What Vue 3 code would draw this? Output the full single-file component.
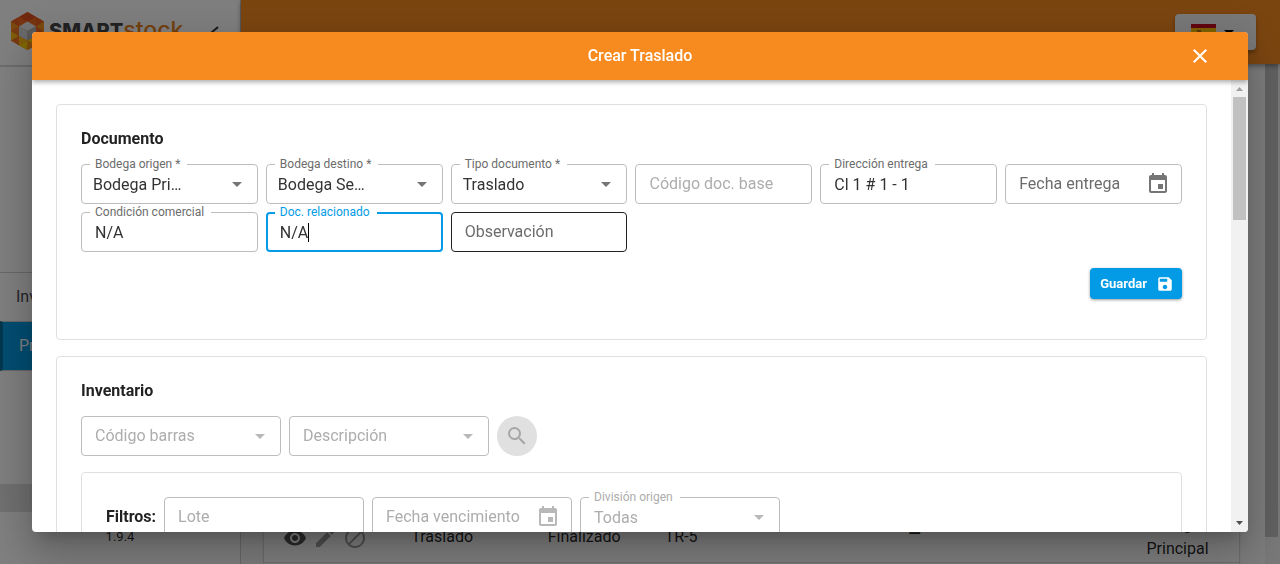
<script setup>
import { ref } from 'vue'

const documentFields = ref([
  { id: 'origen', label: 'Bodega origen *', type: 'select', value: 'Bodega Principal' },
  { id: 'destino', label: 'Bodega destino *', type: 'select', value: 'Bodega Secundaria' },
  { id: 'tipo', label: 'Tipo documento *', type: 'select', value: 'Traslado' },
  { id: 'base', label: 'Código doc. base', type: 'text', value: '', disabled: true },
  { id: 'direccion', label: 'Dirección entrega', type: 'text', value: 'Cl 1 # 1 - 1' },
  { id: 'fecha', label: 'Fecha entrega', type: 'date', value: '' },
  { id: 'condicion', label: 'Condición comercial', type: 'text', value: 'N/A' },
  { id: 'relacionado', label: 'Doc. relacionado', type: 'text', value: 'N/A', active: true },
  { id: 'observacion', label: 'Observación', type: 'text', value: '', hovered: true }
])

const searchFields = ref([
  { id: 'barras', label: 'Código barras', type: 'select', value: '', disabled: true },
  { id: 'descripcion', label: 'Descripción', type: 'select', value: '', disabled: true }
])

const filterFields = ref([
  { id: 'lote', label: 'Lote', type: 'text', value: '', disabled: true },
  { id: 'vencimiento', label: 'Fecha vencimiento', type: 'date', value: '', disabled: true },
  { id: 'division', label: 'División origen', type: 'select', value: 'Todas', disabled: true }
])

const fieldClass = (f) => ({
  disabled: f.disabled,
  active: f.active,
  hovered: f.hovered,
  floating: f.value !== ''
})
</script>

<template>
  <div class="page">
    <aside class="sidebar">
      <div class="brand">
        <svg class="brand-mark" viewBox="0 0 34 38" aria-hidden="true">
          <path fill="#f26a21" d="M17 0 33.500 9.500v19L17 38 .5 28.500v-19z" />
          <path fill="#e2531f" d="M17 0 8.500 5l8.500 4.500zM17 0l8.500 5L17 9.500z" />
          <path fill="#ea5f20" d="M.5 9.500 8.500 5v9.500zM33.500 9.500 25.500 5v9.500z" />
          <path fill="#f7941d" d="M.5 9.500l8 5-8 4.500zM33.500 9.500V19l-8-4.500z" />
          <path fill="#fdb913" d="M.5 19v9.500l8-4.500zM33.500 19v9.500l-8-4.500zM8.500 24v9.500L17 28.500z" />
          <path fill="#ee7623" d="M.5 28.500l8-4.500v9.500zM8.500 14.500V24l-8-5z" />
          <path fill="#fdd000" d="M8.500 33.500 17 38v-9.500zM25.500 24v9.500L17 28.500z" />
          <path fill="#f7941d" d="M17 38l8.500-4.500-8.500-5zM33.500 28.500l-8-4.500v9.500z" />
          <path fill="#e4e6e8" d="M17 9.500l8.500 5L17 19l-8.500-4.500z" />
          <path fill="#cfd2d5" d="M8.500 14.500 17 19v9.500L8.500 24z" />
          <path fill="#aeb2b6" d="M25.500 14.500 17 19v9.500l8.500-4.500z" />
        </svg>
        <span class="brand-name">SMART<b>stock</b></span>
        <svg class="brand-toggle" viewBox="0 0 12 16" aria-hidden="true">
          <path d="M10 2 3 8l7 6" fill="none" stroke="#333" stroke-width="2" />
        </svg>
      </div>
      <div class="profile"></div>
      <nav>
        <a class="nav-item" href="#">Inventario</a>
        <a class="nav-item current" href="#">Procesos</a>
        <div class="subnav"></div>
        <div class="subnav-current"></div>
      </nav>
      <p class="version">1.9.4</p>
    </aside>

    <div class="workspace">
      <header class="topbar">
        <button class="language" type="button" aria-label="Idioma">
          <svg width="25" height="17" viewBox="0 0 25 17" aria-hidden="true">
            <path fill="#c60b1e" d="M0 0h25v17H0z" />
            <path fill="#ffc400" d="M0 4h25v9H0z" />
            <path fill="#ad6b19" d="M6 6h4v5H6z" />
          </svg>
          <svg width="10" height="5" viewBox="0 0 10 5" aria-hidden="true"><path d="M0 0h10L5 5z" /></svg>
        </button>
      </header>
      <div class="content">
        <div class="list-card">
          <table>
            <tbody>
              <tr>
                <td class="col-actions">
                  <div class="actions">
                    <svg width="24" height="24" viewBox="0 0 24 24" fill="#555" aria-hidden="true"><path d="M12 4.500C7 4.500 2.730 7.610 1 12c1.730 4.390 6 7.500 11 7.500s9.270-3.110 11-7.500c-1.730-4.390-6-7.500-11-7.500zM12 17c-2.760 0-5-2.240-5-5s2.240-5 5-5 5 2.240 5 5-2.240 5-5 5zm0-8c-1.660 0-3 1.340-3 3s1.340 3 3 3 3-1.340 3-3-1.340-3-3-3z" /></svg>
                    <svg width="24" height="24" viewBox="0 0 24 24" fill="#a0a0a0" aria-hidden="true"><path d="M3 17.250V21h3.750L17.810 9.940l-3.750-3.750L3 17.250zM20.710 7.040a1 1 0 0 0 0-1.410l-2.340-2.340a1 1 0 0 0-1.410 0l-1.830 1.830 3.750 3.750 1.830-1.830z" /></svg>
                    <svg width="24" height="24" viewBox="0 0 24 24" fill="#a0a0a0" aria-hidden="true"><path d="M12 2C6.480 2 2 6.480 2 12s4.480 10 10 10 10-4.480 10-10S17.520 2 12 2zM4 12c0-4.420 3.580-8 8-8 1.850 0 3.550.630 4.900 1.690L5.690 16.900A7.900 7.900 0 0 1 4 12zm8 8a7.900 7.900 0 0 1-4.900-1.690L18.310 7.100A7.900 7.900 0 0 1 20 12c0 4.420-3.580 8-8 8z" /></svg>
                  </div>
                </td>
                <td class="col-type">Traslado</td>
                <td class="col-state">Finalizado</td>
                <td class="col-number">TR-5</td>
                <td class="col-note"><b>—</b></td>
                <td class="col-store">Bodega<br />Principal</td>
              </tr>
            </tbody>
          </table>
        </div>
        <div class="page-scroll"><div class="page-thumb"></div></div>
      </div>
    </div>

    <div class="backdrop">
      <section class="dialog" role="dialog" aria-labelledby="dialog-title">
        <header class="dialog-bar">
          <h1 id="dialog-title">Crear Traslado</h1>
          <button class="close" type="button" aria-label="Cerrar">
            <svg width="24" height="24" viewBox="0 0 24 24" fill="#fff" aria-hidden="true"><path d="M19 6.410 17.590 5 12 10.590 6.410 5 5 6.410 10.590 12 5 17.590 6.410 19 12 13.410 17.590 19 19 17.590 13.410 12z" /></svg>
          </button>
        </header>

        <div class="dialog-body">
          <div class="dialog-content">
            <section class="panel">
              <h2>Documento</h2>
              <form class="document-grid" @submit.prevent>
                <div v-for="f in documentFields" :key="f.id" class="field" :class="fieldClass(f)">
                  <label :for="f.id">{{ f.label }}</label>
                  <select v-if="f.type === 'select'" :id="f.id" v-model="f.value">
                    <option>{{ f.value }}</option>
                  </select>
                  <input v-else :id="f.id" v-model="f.value" type="text" :disabled="f.disabled" />
                  <svg v-if="f.type === 'select'" class="arrow" viewBox="0 0 10 5" aria-hidden="true"><path d="M0 0h10L5 5z" /></svg>
                  <svg v-if="f.type === 'date'" class="calendar" viewBox="0 0 24 24" aria-hidden="true"><path d="M17 12h-5v5h5v-5zM16 1v2H8V1H6v2H5c-1.110 0-1.990.900-1.990 2L3 19c0 1.100.890 2 2 2h14c1.100 0 2-.900 2-2V5c0-1.100-.900-2-2-2h-1V1h-2zm3 18H5V8h14v11z" /></svg>
                  <span v-if="f.active" class="caret"></span>
                </div>
              </form>
              <div class="panel-actions">
                <button class="save" type="button">
                  Guardar
                  <svg width="18" height="18" viewBox="0 0 24 24" fill="#fff" aria-hidden="true"><path d="M17 3H5a2 2 0 0 0-2 2v14a2 2 0 0 0 2 2h14c1.100 0 2-.900 2-2V7l-4-4zm-5 16c-1.660 0-3-1.340-3-3s1.340-3 3-3 3 1.340 3 3-1.340 3-3 3zm3-10H5V5h10v4z" /></svg>
                </button>
              </div>
            </section>

            <section class="panel">
              <h2>Inventario</h2>
              <div class="row">
                <div v-for="f in searchFields" :key="f.id" class="field fixed" :class="fieldClass(f)">
                  <label :for="f.id">{{ f.label }}</label>
                  <select :id="f.id" v-model="f.value" disabled></select>
                  <svg class="arrow" viewBox="0 0 10 5" aria-hidden="true"><path d="M0 0h10L5 5z" /></svg>
                </div>
                <button class="search" type="button" aria-label="Buscar" disabled>
                  <svg width="24" height="24" viewBox="0 0 24 24" aria-hidden="true"><path d="M15.500 14h-.790l-.280-.270A6.470 6.470 0 0 0 16 9.500 6.500 6.500 0 1 0 9.500 16c1.610 0 3.090-.590 4.230-1.570l.270.280v.790l5 4.990L20.490 19l-4.990-5zm-6 0C7.010 14 5 11.990 5 9.500S7.010 5 9.500 5 14 7.010 14 9.500 11.990 14 9.500 14z" /></svg>
                </button>
              </div>
              <div class="panel filters">
                <div class="row">
                  <h3>Filtros:</h3>
                  <div v-for="f in filterFields" :key="f.id" class="field fixed" :class="fieldClass(f)">
                    <label :for="f.id">{{ f.label }}</label>
                    <select v-if="f.type === 'select'" :id="f.id" v-model="f.value" disabled>
                      <option>{{ f.value }}</option>
                    </select>
                    <input v-else :id="f.id" v-model="f.value" type="text" disabled />
                    <svg v-if="f.type === 'select'" class="arrow" viewBox="0 0 10 5" aria-hidden="true"><path d="M0 0h10L5 5z" /></svg>
                    <svg v-if="f.type === 'date'" class="calendar" viewBox="0 0 24 24" aria-hidden="true"><path d="M17 12h-5v5h5v-5zM16 1v2H8V1H6v2H5c-1.110 0-1.990.900-1.990 2L3 19c0 1.100.890 2 2 2h14c1.100 0 2-.900 2-2V5c0-1.100-.900-2-2-2h-1V1h-2zm3 18H5V8h14v11z" /></svg>
                  </div>
                </div>
              </div>
            </section>
          </div>

          <div class="scrollbar" aria-hidden="true">
            <svg class="up" viewBox="0 0 17 17"><path d="M5 11h7L8.500 7z" /></svg>
            <div class="thumb"></div>
            <svg class="down" viewBox="0 0 17 17"><path d="M5 6h7l-3.500 4z" /></svg>
          </div>
        </div>
      </section>
    </div>
  </div>
</template>

<style>
body {
  background: #fff;
}
</style>

<style scoped>
* {
  box-sizing: border-box;
}
h1, h2, h3, p {
  margin: 0;
}
.page {
  display: flex;
  height: 100vh;
  overflow: hidden;
  font-family: Roboto, "Liberation Sans", sans-serif;
  font-size: 16px;
  line-height: 24px;
  color: rgba(0, 0, 0, 0.87);
}
button, input, select {
  font-family: inherit;
}

/* Navigation */
.sidebar {
  display: flex;
  flex-direction: column;
  flex: 0 0 241px;
  border-right: 1px solid #d0d0d0;
  background: #fff;
}
.brand {
  display: flex;
  align-items: center;
  flex: 0 0 67px;
  padding: 0 20px 4px 10px;
  border-bottom: 2px solid #d8d8d8;
}
.brand-mark {
  width: 35px;
  height: 38px;
}
.brand-name {
  margin-left: 4px;
  font-family: Inter, sans-serif;
  font-size: 20px;
  font-weight: 800;
  color: #444;
}
.brand-name b {
  font-size: 23px;
  font-weight: 500;
  color: #e8821e;
}
.brand-toggle {
  width: 12px;
  height: 16px;
  margin: 4px 0 0 auto;
}
.profile {
  flex: 0 0 205px;
}
.nav-item {
  display: block;
  height: 49px;
  padding: 0 16px;
  border-top: 1px solid #d0d0d0;
  line-height: 48px;
  color: #4a4a55;
  text-decoration: none;
}
.nav-item.current {
  height: 50px;
  border-left: 3px solid #006da0;
  border-bottom: 1px solid #d0d0d0;
  background: #039be5;
  color: #fff;
}
.subnav {
  height: 113px;
}
.subnav-current {
  height: 28px;
  background: #e0e0e0;
}
.version {
  margin-top: 15px;
  text-align: center;
  font-size: 13px;
  line-height: 20px;
}
.workspace {
  display: flex;
  flex-direction: column;
  flex: 1;
}
.topbar {
  display: flex;
  justify-content: flex-end;
  flex: 0 0 64px;
  padding: 14px 24px;
  background: #f78b20;
  box-shadow: 0 2px 5px rgba(0, 0, 0, 0.4);
  z-index: 1;
}
.language {
  display: flex;
  align-items: center;
  gap: 8px;
  height: 36px;
  padding: 0 22px 0 16px;
  border: 0;
  border-radius: 4px;
  background: #f3f3f3;
  box-shadow: 0 3px 4px rgba(0, 0, 0, 0.3);
}
.content {
  display: flex;
  flex: 1;
  padding-left: 23px;
  background: #fafafa;
}
.list-card {
  display: flex;
  align-items: flex-end;
  flex: 1;
  margin-right: 26px;
  padding-bottom: 1px;
  background: #fff;
  box-shadow: 0 0 2px rgba(0, 0, 0, 0.4);
}
table {
  width: 100%;
  table-layout: fixed;
  border-collapse: collapse;
  border-bottom: 1px solid #ddd;
}
td {
  padding: 0 0 1px 1px;
}
.col-actions {
  width: 15%;
}
.actions {
  display: flex;
  gap: 6px;
  padding: 2px 0 0 18px;
}
.col-type {
  width: 14%;
}
.col-state {
  width: 12%;
}
.col-number {
  width: 25%;
}
.col-note {
  width: 24%;
}
.col-note b {
  display: block;
  margin-top: -6px;
}
.col-store {
  padding-left: 5px;
}
.page-scroll {
  width: 15px;
  background: #f1f1f1;
}
.page-thumb {
  width: 13px;
  height: 473px;
  background: #c1c1c1;
}

/* Dialog */
.backdrop {
  position: fixed;
  inset: 0;
  z-index: 2;
  display: flex;
  padding: 32px;
  background: rgba(0, 0, 0, 0.5);
}
.dialog {
  display: flex;
  flex-direction: column;
  flex: 1;
  border-radius: 4px;
  overflow: hidden;
  background: #fff;
  box-shadow: 0 11px 15px -7px rgba(0, 0, 0, 0.2), 0 24px 38px 3px rgba(0, 0, 0, 0.14), 0 9px 46px 8px rgba(0, 0, 0, 0.12);
}
.dialog-bar {
  display: grid;
  grid-template-columns: 48px 1fr 48px;
  align-items: center;
  flex: 0 0 48px;
  padding: 0 24px;
  background: #f78b20;
  color: #fff;
  box-shadow: 0 2px 5px rgba(0, 0, 0, 0.35);
  z-index: 1;
}
h1 {
  grid-column: 2;
  text-align: center;
  font-size: 16px;
  font-weight: 500;
}
.close {
  display: flex;
  justify-content: center;
  padding: 0;
  border: 0;
  background: none;
}
.dialog-body {
  display: flex;
  flex: 1;
  min-height: 0;
}
.dialog-content {
  display: flex;
  flex-direction: column;
  gap: 16px;
  flex: 1;
  padding: 24px;
  overflow: hidden;
}
.panel {
  flex: none;
  padding: 24px;
  border: 1px solid #e0e0e0;
  border-radius: 4px;
}
h2 {
  margin-bottom: 16px;
  font-size: 16px;
  line-height: 19px;
  font-weight: 700;
}
h3 {
  font-size: 16px;
  font-weight: 700;
}
.document-grid {
  display: grid;
  grid-template-columns: repeat(6, 1fr);
  gap: 8px;
}
.field {
  position: relative;
  display: flex;
  align-items: center;
  min-width: 0;
  height: 40px;
  border: 1px solid #bdbdbd;
  border-radius: 4px;
}
.field.fixed {
  flex: 0 0 200px;
}
.field label {
  position: absolute;
  left: 13px;
  color: #6c6c6c;
  pointer-events: none;
}
.field.floating label {
  top: -8px;
  left: 8px;
  padding: 0 7px 0 5px;
  background: #fff;
  font-size: 12px;
  line-height: 14px;
}
.field input,
.field select {
  flex: 1;
  width: 100%;
  min-width: 0;
  height: 100%;
  padding: 0 13px;
  border: 0;
  outline: 0;
  appearance: none;
  background: transparent;
  font-size: 16px;
  color: #333;
}
.field select {
  margin-right: 72px;
  padding: 0 0 0 11px;
  text-overflow: ellipsis;
  white-space: nowrap;
  overflow: hidden;
}
.field.fixed select {
  padding-left: 13px;
}
.arrow {
  position: absolute;
  right: 15px;
  width: 10px;
  height: 5px;
  fill: #757575;
}
.calendar {
  position: absolute;
  right: 11px;
  width: 24px;
  height: 24px;
  fill: #757575;
}
.field.disabled label,
.field.disabled input,
.field.disabled select {
  color: #adadad;
  opacity: 1;
}
.field.disabled .arrow,
.field.disabled .calendar {
  fill: #b8b8b8;
}
.field.hovered {
  border-color: #212121;
}
.field.active {
  border: 2px solid #039be5;
}
.field.active label {
  top: -9px;
  left: 7px;
  color: #039be5;
}
.field.active input {
  padding: 0 12px;
}
.caret {
  position: absolute;
  left: 40px;
  width: 1px;
  height: 19px;
  background: #000;
}
.panel-actions {
  display: flex;
  justify-content: flex-end;
  padding: 16px 0;
}
.save {
  display: flex;
  align-items: center;
  gap: 9px;
  height: 31px;
  padding: 0 8px 0 10px;
  border: 0;
  border-radius: 4px;
  background: #039be5;
  color: #fff;
  font-size: 13px;
  font-weight: 700;
  box-shadow: 0 1px 3px rgba(0, 0, 0, 0.4);
}
.row {
  display: flex;
  align-items: center;
  gap: 8px;
}
.search {
  display: flex;
  align-items: center;
  justify-content: center;
  width: 40px;
  height: 40px;
  padding: 0;
  border: 0;
  border-radius: 50%;
  background: #e0e0e0;
}
.search svg {
  fill: #a6a6a6;
}
.filters {
  margin-top: 16px;
}
.scrollbar {
  display: flex;
  flex-direction: column;
  flex: 0 0 17px;
  background: #f1f1f1;
}
.scrollbar svg {
  width: 17px;
  height: 17px;
}
.up {
  fill: #a0a0a0;
}
.down {
  margin-top: auto;
  fill: #505050;
}
.thumb {
  height: 123px;
  margin: 0 2px;
  background: #c1c1c1;
}
</style>
